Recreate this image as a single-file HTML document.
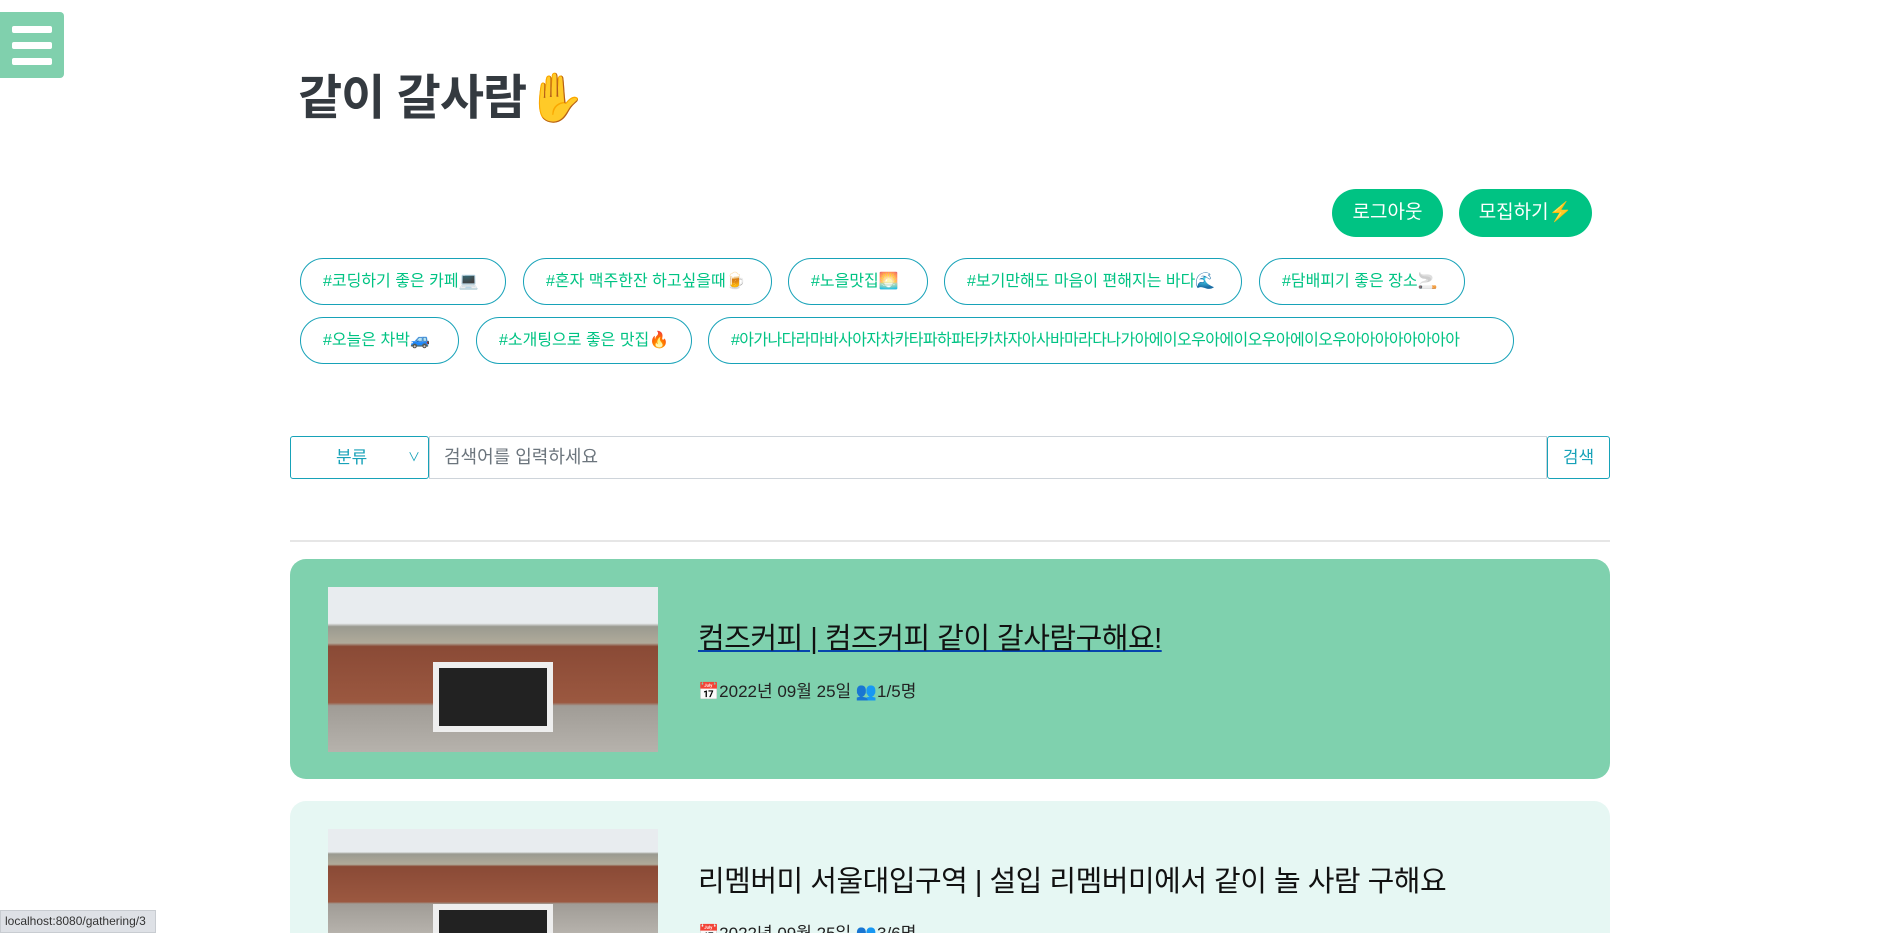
<!DOCTYPE html>
<html><head><meta charset="utf-8"><style>
*{box-sizing:border-box;margin:0;padding:0}
html,body{width:1900px;height:933px;overflow:hidden}
body{background:#fff;font-family:"Liberation Sans","Noto Sans CJK KR",sans-serif;position:relative}
#wrap{position:absolute;left:0;top:0;width:1900px;height:933px;overflow:hidden}
.menu{position:absolute;left:0;top:12px;width:64px;height:66px;background:#80d0ad;border-radius:0 4px 4px 0}
.menu i{position:absolute;left:12px;width:40px;height:7px;background:#fff;border-radius:2px}
h1{position:absolute;left:298px;top:58px;font-size:48px;font-weight:bold;color:#343a40;letter-spacing:-1px}
.btn{position:absolute;top:189px;height:48px;border-radius:24px;background:#00c383;color:#fff;font-size:19px;line-height:48px;text-align:center}
.tag{position:absolute;height:47px;border:1px solid #17a2b8;border-radius:24px;color:#00c383;font-size:16px;line-height:45px;padding-left:22px;white-space:nowrap;overflow:hidden}
.sel{position:absolute;left:290px;top:436px;width:139px;height:43px;border:1px solid #17a2b8;border-radius:3px;color:#17a2b8;font-size:17px;line-height:41px;padding-left:45px}
.sel span{position:absolute;right:8px;font-size:12px}
.inp{position:absolute;left:429px;top:436px;width:1118px;height:43px;border:1px solid #ced4da;color:#6c757d;font-size:18px;line-height:41px;padding-left:14px}
.sb{position:absolute;left:1547px;top:436px;width:63px;height:43px;border:1px solid #17a2b8;border-radius:3px;color:#17a2b8;font-size:17px;line-height:41px;text-align:center}
hr{position:absolute;left:290px;top:540px;width:1320px;border:0;border-top:2px solid #e6e6e6}
.card{position:absolute;left:290px;width:1320px;height:220px;border-radius:16px;overflow:hidden}
.img{position:absolute;left:38px;top:28px;width:330px;height:165px;background:linear-gradient(180deg,#e8ecef 0,#e8ecef 22%,#9a9a90 24%,#b0aa9a 34%,#8a4a36 36%,#9b5840 70%,#a09c96 72%,#b6b2ac 100%);overflow:hidden}
.img b{position:absolute;left:105px;top:75px;width:120px;height:70px;background:#222;border:6px solid #eee}
.t{position:absolute;left:408px;font-size:29px;color:#111;letter-spacing:-0.5px;white-space:nowrap}
.m{position:absolute;left:408px;font-size:17px;color:#222;white-space:nowrap}
.status{position:absolute;left:0;top:910px;width:156px;height:23px;background:#dee1e6;border:1px solid #c8ccd1;font-size:12px;line-height:21px;padding-left:4px;color:#333}
</style></head><body><div id="wrap">
<div class="menu"><i style="top:14px"></i><i style="top:30px"></i><i style="top:46px"></i></div>
<h1>같이 갈사람✋</h1>
<div class="btn" style="left:1332px;width:111px">로그아웃</div>
<div class="btn" style="left:1459px;width:133px">모집하기⚡</div>
<div class="tag" style="left:300px;top:258px;width:206px">#코딩하기 좋은 카페💻</div>
<div class="tag" style="left:523px;top:258px;width:249px">#혼자 맥주한잔 하고싶을때🍺</div>
<div class="tag" style="left:788px;top:258px;width:140px">#노을맛집🌅</div>
<div class="tag" style="left:944px;top:258px;width:298px">#보기만해도 마음이 편해지는 바다🌊</div>
<div class="tag" style="left:1259px;top:258px;width:206px">#담배피기 좋은 장소🚬</div>
<div class="tag" style="left:300px;top:317px;width:159px">#오늘은 차박🚙</div>
<div class="tag" style="left:476px;top:317px;width:216px">#소개팅으로 좋은 맛집🔥</div>
<div class="tag" style="left:708px;top:317px;width:806px;letter-spacing:-0.6px">#아가나다라마바사아자차카타파하파타카차자아사바마라다나가아에이오우아에이오우아에이오우아아아아아아아아</div>
<div class="sel">분류<span>∨</span></div>
<div class="inp">검색어를 입력하세요</div>
<div class="sb">검색</div>
<hr>
<div class="card" style="top:559px;background:#7fd1ae">
<div class="img"><b></b></div>
<div class="t" style="top:56px;text-decoration:underline;text-decoration-color:#0645ad">컴즈커피 | 컴즈커피 같이 갈사람구해요!</div>
<div class="m" style="top:118px">📅2022년 09월 25일 👥1/5명</div>
</div>
<div class="card" style="top:801px;height:132px;border-radius:16px 16px 0 0;background:#e6f7f3">
<div class="img" style="height:104px"><b></b></div>
<div class="t" style="top:57px">리멤버미 서울대입구역 | 설입 리멤버미에서 같이 놀 사람 구해요</div>
<div class="m" style="top:118px;height:14px;overflow:hidden">📅2022년 09월 25일 👥3/6명</div>
</div>
<div class="status">localhost:8080/gathering/3</div>
</div></body></html>
